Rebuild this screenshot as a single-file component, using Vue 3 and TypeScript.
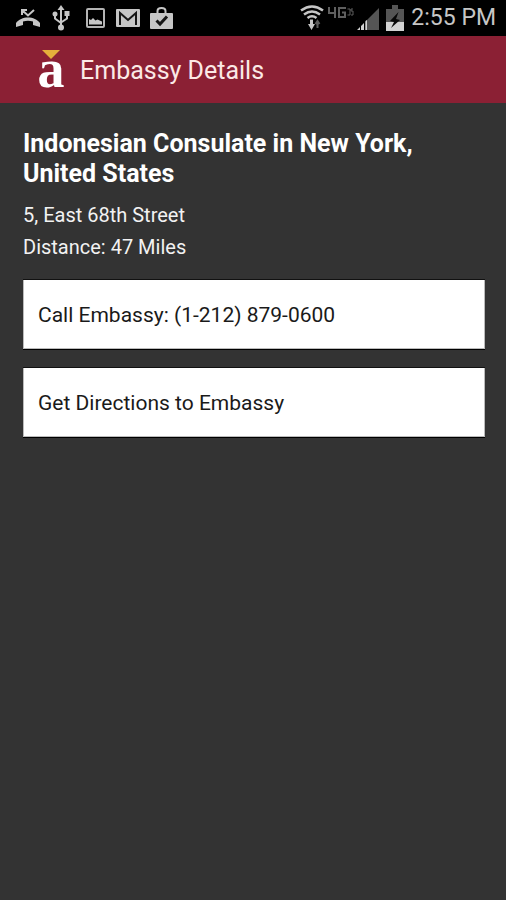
<script setup lang="ts">
interface Embassy {
  name: string
  address: string
  distance: string
  phone: string
}

const embassy: Embassy = {
  name: 'Indonesian Consulate in New York, United States',
  address: '5, East 68th Street',
  distance: '47 Miles',
  phone: '(1-212) 879-0600',
}
</script>

<template>
  <div class="screen">
    <div class="status">
      <div class="group left">
        <svg width="24" height="20" viewBox="0 0 24 20" aria-hidden="true">
          <path d="M0 19v-4c5-7.500 19-7.500 24 0v4l-7-2v-3.500q-5-1.500-10 0V17z" fill="#c6c6c6" />
          <path d="M6 7V2h5M6.500 2.500l5.500 5L18 2" fill="none" stroke="#c6c6c6" stroke-width="2" />
        </svg>
        <svg width="24" height="26" viewBox="-2 0 24 26" aria-hidden="true">
          <path d="M9 4v18M3 9v4.500l6 4.500M15 8v5.500l-6 4" fill="none" stroke="#c6c6c6" stroke-width="2" />
          <path d="M9 0l3.500 5h-7z" fill="#c6c6c6" />
          <circle cx="9" cy="22.500" r="3" fill="#c6c6c6" />
          <circle cx="3" cy="9" r="2.500" fill="#c6c6c6" />
          <path d="M12.500 6h5v5h-5z" fill="#c6c6c6" />
        </svg>
        <svg width="22" height="20" viewBox="-2 0 22 20" aria-hidden="true">
          <rect x="1" y="1" width="17" height="18" rx="1" fill="none" stroke="#b4b4b4" stroke-width="2" />
          <path d="M3 16.500V11l2 1 2-2 2.500 2.500 2-1 4.500 2v3z" fill="#c6c6c6" />
        </svg>
        <svg width="24" height="18" viewBox="0 0 24 18" aria-hidden="true">
          <rect width="24" height="18" rx="1" fill="#c6c6c6" />
          <path d="M4 16V4l8 7 8-7v12" fill="none" stroke="#161616" stroke-width="2" />
        </svg>
        <svg width="23" height="23" viewBox="0 0 23 23" aria-hidden="true">
          <path d="M7.500 7V4q0-3 4-3t4 3v3" fill="none" stroke="#c6c6c6" stroke-width="2" />
          <rect y="6" width="23" height="16" rx="1" fill="#c6c6c6" />
          <path d="M6.500 13.500l3.500 3.500 7-7.500" fill="none" stroke="#161616" stroke-width="3" />
        </svg>
      </div>
      <div class="group right">
        <div class="group network">
          <svg width="24" height="26" viewBox="0 0 24 26" aria-hidden="true">
            <g fill="none" stroke="#c6c6c6" stroke-width="2.500">
              <path d="M1 5.500q11-8 22 0" />
              <path d="M4 9.500q8-6 16 0" />
              <path d="M7.500 13q4.500-3.500 9 0" />
            </g>
            <path d="M10 14.500h3V19h2l-3.500 6L8 19h2z" fill="#c6c6c6" />
            <path d="M17.500 23v-7M15.500 19l2-3 2 3" fill="none" stroke="#5c5c5c" stroke-width="2" />
          </svg>
          <svg class="lte" width="27" height="12" viewBox="0 0 27 12" aria-hidden="true">
            <g fill="none" stroke="#5f5f5f" stroke-width="2">
              <path d="M2 0v6h7M8 0v11" />
              <path d="M19 1h-7v9h6V5.500h-3" />
              <path d="M20.500 2h2.500v6h-2.500M26 2h-2v2h2v4h-2" stroke-width="1" />
            </g>
          </svg>
          <svg width="22" height="23" viewBox="0 0 22 23" aria-hidden="true">
            <path d="M8 15L22 1v22H8z" fill="#555" />
            <path d="M0 23l3-3v3zM4 23v-4l3-3v7zM8.500 23v-9l1.500-1v10z" fill="#d2d2d2" />
          </svg>
        </div>
        <svg width="18" height="26" viewBox="0 0 18 26" aria-hidden="true">
          <path d="M6 0h6v4h6v22H0V4h6z" fill="#555" />
          <path d="M0 17h18v9H0z" fill="#d2d2d2" />
          <path d="M12.500 7L4 16l4 1-3 6 9-8-4-1z" fill="#080808" />
        </svg>
        <span class="clock">2:55 PM</span>
      </div>
    </div>

    <header class="bar">
      <div class="logo" aria-hidden="true">
        <svg class="caret" width="18" height="9" viewBox="0 0 18 9"><path d="M0 0h18L9 9z" fill="#e5ae3b" /></svg>
        <span class="letter">a</span>
      </div>
      <h1>Embassy Details</h1>
    </header>

    <main>
      <h2>{{ embassy.name }}</h2>
      <p>{{ embassy.address }}</p>
      <p>Distance: {{ embassy.distance }}</p>
      <div class="actions">
        <button type="button">Call Embassy: {{ embassy.phone }}</button>
        <button type="button">Get Directions to Embassy</button>
      </div>
    </main>
  </div>
</template>

<style>
body {
  background: #333;
}
</style>

<style scoped>
.screen {
  min-height: 100vh;
  background: #333;
  color: #fff;
  font-family: Roboto, sans-serif;
}

.status {
  display: flex;
  justify-content: space-between;
  height: 36px;
  padding: 0 10px 0 16px;
  background: #000;
}

.group {
  display: flex;
  align-items: center;
}

.left {
  gap: 10px;
}

.right {
  gap: 7px;
}

.network {
  gap: 3px;
}

.lte {
  align-self: flex-start;
  margin-top: 2px;
}

.clock {
  font-size: 23px;
  line-height: 38px;
  color: #c6c6c6;
}

.bar {
  display: flex;
  align-items: center;
  gap: 15px;
  box-sizing: border-box;
  height: 67px;
  padding: 2px 37px 0;
  background: #8b2034;
}

.logo {
  display: flex;
  flex-direction: column;
  align-items: center;
  width: 28px;
}

.caret {
  flex: none;
}

.letter {
  height: 32px;
  font: bold 54px/20px "Liberation Serif", serif;
}

h1 {
  margin: 0;
  font-size: 25px;
  font-weight: 400;
  line-height: 30px;
  color: #fbe9e6;
}

main {
  padding: 26px 21px 26px 23px;
}

h2 {
  margin: 0 0 10px;
  font-size: 25px;
  font-weight: 700;
  line-height: 30px;
}

p {
  margin: 0;
  font-size: 20px;
  line-height: 32px;
  color: #f2f2f2;
}

.actions {
  display: grid;
  gap: 19px;
  margin-top: 17px;
}

button {
  padding: 21px 14px 19px;
  border: 1px solid #bbb;
  border-width: 0 1px 1px;
  border-radius: 0;
  background: #fff;
  box-shadow: 0 1px #000, 0 -1px #111;
  color: #1a1a1a;
  font: 400 21px/28px Roboto, sans-serif;
  text-align: left;
}
</style>
